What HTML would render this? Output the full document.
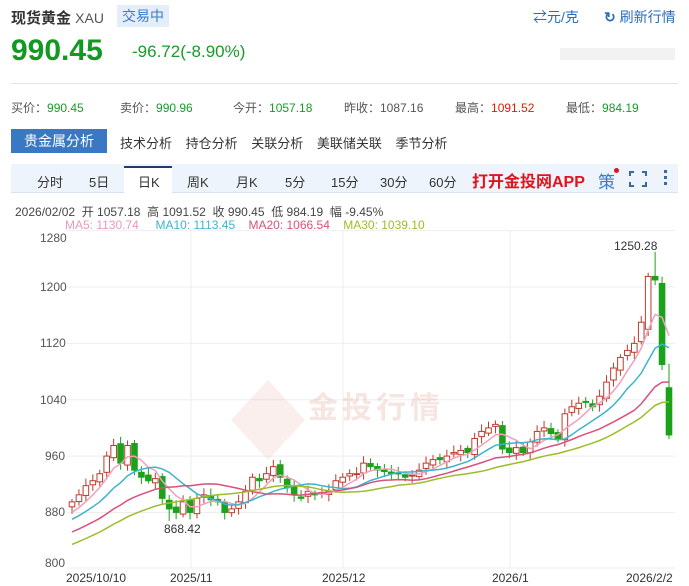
<!DOCTYPE html>
<html><head><meta charset="utf-8"><style>
body{margin:0;width:689px;height:586px;overflow:hidden;background:#fff;font-family:"Liberation Sans","Noto Sans CJK SC",sans-serif;color:#333;position:relative}
.a{position:absolute;white-space:nowrap}
.g{color:#1a9a2a}.r{color:#d81e06}
</style></head><body>
<div class="a" style="left:11px;top:7px;font-size:15px;font-weight:bold;color:#333">现货黄金 <span style="font-weight:normal;color:#555;font-size:14px">XAU</span></div>
<div class="a" style="left:117px;top:5px;width:52px;height:22px;background:#e3eefa;color:#3a7bc8;font-size:14px;line-height:22px;text-align:center">交易中</div>
<div class="a" style="left:533px;top:7px;font-size:14px;color:#2b6cb8">⇄元/克</div>
<div class="a" style="left:604px;top:7px;font-size:14px;color:#2b6cb8"><span style="font-weight:bold">↻</span> 刷新行情</div>
<div class="a g" style="left:11px;top:34px;font-size:30px;font-weight:bold;color:#119922">990.45</div>
<div class="a g" style="left:132px;top:42px;font-size:17px">-96.72(-8.90%)</div>
<div class="a" style="left:560px;top:48px;width:115px;height:12px;background:#f2f2f2"></div>
<div class="a" style="left:11px;top:83px;width:667px;height:1px;background:#e6e6e6"></div>
<div class="a" style="left:11px;top:99px;font-size:12px;color:#555">买价：<span class="g">990.45</span></div>
<div class="a" style="left:120px;top:99px;font-size:12px;color:#555">卖价：<span class="g">990.96</span></div>
<div class="a" style="left:233px;top:99px;font-size:12px;color:#555">今开：<span class="g">1057.18</span></div>
<div class="a" style="left:344px;top:99px;font-size:12px;color:#555">昨收：1087.16</div>
<div class="a" style="left:455px;top:99px;font-size:12px;color:#555">最高：<span class="r">1091.52</span></div>
<div class="a" style="left:566px;top:99px;font-size:12px;color:#555">最低：<span class="g">984.19</span></div>
<div class="a" style="left:11px;top:129px;width:96px;height:24px;background:#3b78c4;color:#fff;font-size:14px;line-height:24px;text-align:center">贵金属分析</div>
<div class="a" style="left:120px;top:133px;font-size:13px;color:#333;word-spacing:10px">技术分析 持仓分析 关联分析 美联储关联 季节分析</div>
<div class="a" style="left:11px;top:164px;width:667px;height:28px;background:#eef4fb;border-bottom:1px solid #d8e3ef"></div>
<div class="a" style="left:124px;top:166px;width:48px;height:27px;background:#fff;border-top:2px solid #1e3d6a"></div>
<div class="a" style="top:172px;left:37px;font-size:13px;color:#333">分时</div>
<div class="a" style="top:172px;left:89px;font-size:13px">5日</div>
<div class="a" style="top:172px;left:138px;font-size:13px">日K</div>
<div class="a" style="top:172px;left:187px;font-size:13px">周K</div>
<div class="a" style="top:172px;left:236px;font-size:13px">月K</div>
<div class="a" style="top:172px;left:285px;font-size:13px">5分</div>
<div class="a" style="top:172px;left:331px;font-size:13px">15分</div>
<div class="a" style="top:172px;left:380px;font-size:13px">30分</div>
<div class="a" style="top:172px;left:429px;font-size:13px">60分</div>
<div class="a" style="top:168px;left:472px;font-size:16px;font-weight:bold;color:#e0141e">打开金投网APP</div>
<div class="a" style="top:168px;left:598px;font-size:17px;color:#3a7bc8">策</div>
<div class="a" style="top:168px;left:614px;width:5px;height:5px;border-radius:50%;background:#e0141e"></div>
<svg class="a" style="left:628px;top:170px" width="20" height="18"><path d="M2 6V2H6M14 2H18V6M18 12V16H14M6 16H2V12" fill="none" stroke="#3a6a9a" stroke-width="2"/></svg>
<div class="a" style="top:170px;left:664px;width:3px;height:3px;background:#3a6a9a;box-shadow:0 6px #3a6a9a,0 12px #3a6a9a"></div>
<div class="a" style="left:15px;top:203px;font-size:12px;color:#444">2026/02/02 &nbsp;开 1057.18 &nbsp;高 1091.52 &nbsp;收 990.45 &nbsp;低 984.19 &nbsp;幅 -9.45%</div>
<div class="a" style="left:65px;top:218px;font-size:12px"><span style="color:#e89ab8">MA5: 1130.74</span> &nbsp;&nbsp;&nbsp; <span style="color:#3cb4cc">MA10: 1113.45</span> &nbsp;&nbsp; <span style="color:#d9507a">MA20: 1066.54</span> &nbsp;&nbsp; <span style="color:#9cbd2a">MA30: 1039.10</span></div>
<svg class="a" id="ch" style="left:0;top:0" width="689" height="586"></svg>
<div class="a" style="left:40px;top:231px;font-size:12px;color:#555">1280</div>
<div class="a" style="left:40px;top:280px;font-size:12px;color:#555">1200</div>
<div class="a" style="left:40px;top:336px;font-size:12px;color:#555">1120</div>
<div class="a" style="left:40px;top:393px;font-size:12px;color:#555">1040</div>
<div class="a" style="left:45px;top:449px;font-size:12px;color:#555">960</div>
<div class="a" style="left:45px;top:505px;font-size:12px;color:#555">880</div>
<div class="a" style="left:45px;top:556px;font-size:12px;color:#555">800</div>
<div class="a" style="left:66px;top:571px;font-size:12px;color:#333">2025/10/10</div>
<div class="a" style="left:170px;top:571px;font-size:12px;color:#333">2025/11</div>
<div class="a" style="left:322px;top:571px;font-size:12px;color:#333">2025/12</div>
<div class="a" style="left:492px;top:571px;font-size:12px;color:#333">2026/1</div>
<div class="a" style="left:626px;top:571px;font-size:12px;color:#333">2026/2/2</div>
<div class="a" style="left:164px;top:522px;font-size:12px;color:#333">868.42</div>
<div class="a" style="left:614px;top:239px;font-size:12px;color:#333">1250.28</div>
<div class="a" style="left:308px;top:383px;font-size:30px;font-weight:bold;color:rgba(220,150,130,0.25);letter-spacing:4px">金投行情</div>
<script>
var s=document.getElementById('ch'),h='';
function Y(v){return 287+(1200-v)*0.7045}
[1280,1200,1120,1040,960,880,800].forEach(function(v){var y=Math.min(Y(v),568);h+='<line x1="67" x2="675" y1="'+y+'" y2="'+y+'" stroke="#eee"/>'});
[191,343,510].forEach(function(x){h+='<line x1="'+x+'" x2="'+x+'" y1="231" y2="568" stroke="#eee"/>'});
h+='<polygon points="268,380 305,420 268,460 231,420" fill="rgba(220,150,130,0.15)"/>';
var c=[895,905,918,925,935,960,975,950,975,940,930,925,928,900,885,880,895,880,900,905,898,895,880,885,895,910,930,925,935,945,930,915,905,900,910,905,908,910,925,930,935,935,950,945,940,938,935,935,930,933,940,950,955,955,960,965,968,965,985,995,1000,1005,970,965,972,965,980,995,1000,992,985,1020,1030,1035,1037,1030,1045,1065,1085,1100,1110,1120,1150,1215,1210,1090,990];
var pre=[];for(var i=0;i<30;i++)pre.push(780+i*3.5);
var all=pre.concat(c),n=c.length,dx=(669-72)/(n-1);
for(var i=0;i<n;i++){var cl=c[i],op=i?c[i-1]+(Math.sin(i*3)*3):888,x=72+i*dx;
if(i==84){op=1215}if(i==85){op=1205}if(i==86){op=1057}if(i==83){op=1140}
var hi=Math.max(op,cl)+4+Math.abs(Math.sin(i*7))*6,lo=Math.min(op,cl)-4-Math.abs(Math.cos(i*5))*6;
if(i==84)hi=1250;if(i==14)lo=868;if(i==86){hi=1091;lo=984}
var up=cl>=op,col=up?'#c0392b':'#1aa31a',y1=Y(Math.max(op,cl)),y2=Y(Math.min(op,cl));if(y2-y1<1)y2=y1+1;
h+='<line x1="'+x+'" x2="'+x+'" y1="'+Y(hi)+'" y2="'+Y(lo)+'" stroke="'+col+'"/>';
h+='<rect x="'+(x-2.8)+'" y="'+y1+'" width="5.6" height="'+(y2-y1)+'" fill="'+(up?'#fff':col)+'" stroke="'+col+'"/>';}
[[5,'#f0a0bc'],[10,'#3cb4cc'],[20,'#d9507a'],[30,'#9cbd2a']].forEach(function(m){var p='';
for(var i=0;i<n;i++){var k=i+30,sm=0;for(var j=0;j<m[0];j++)sm+=all[k-j];p+=(i?'L':'M')+(72+i*dx).toFixed(1)+' '+Y(sm/m[0]).toFixed(1)}
h+='<path d="'+p+'" fill="none" stroke="'+m[1]+'" stroke-width="1.5"/>'});
s.innerHTML=h;
</script>
</body></html>
